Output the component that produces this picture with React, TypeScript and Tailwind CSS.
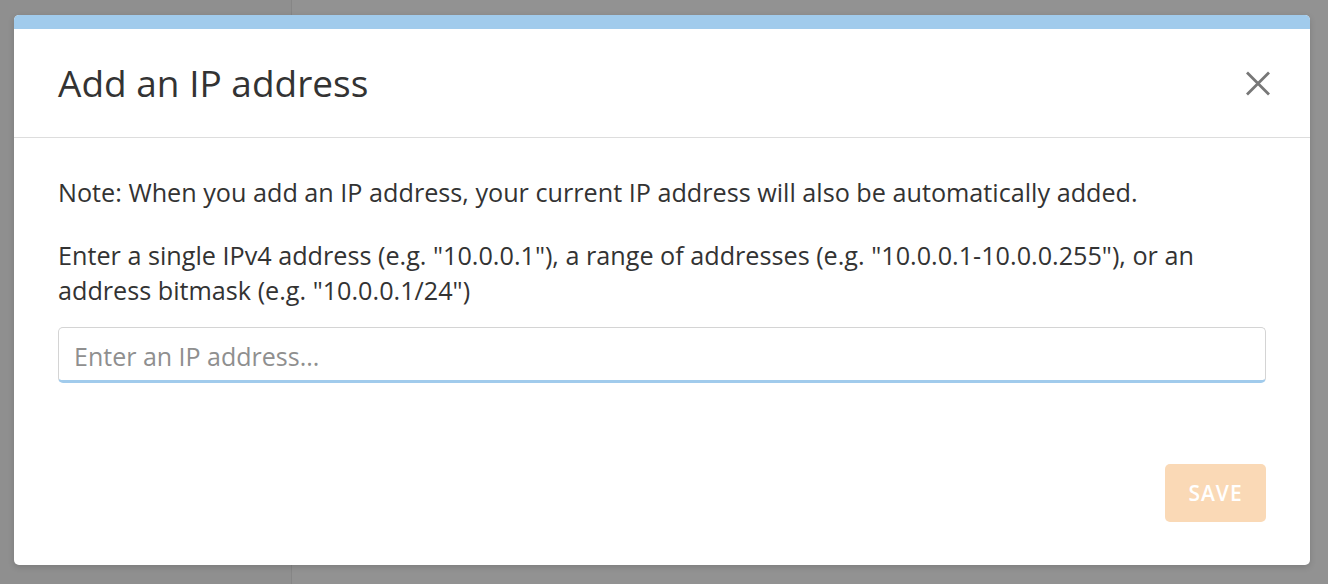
import React from "react";

export default function App() {
  return (
    <div
      className="relative flex h-[584px] w-full overflow-hidden bg-[#929292]"
      style={{ fontFamily: '"Open Sans", "Noto Sans", sans-serif' }}
    >
      <div className="h-full w-[292px] border-r border-[#868686] bg-[#8f8f8f]" />
      <div className="h-full flex-1 bg-[#929292]" />

      <div className="absolute left-[14px] top-[15px] flex h-[550px] w-[1296px] flex-col overflow-hidden rounded-[5px] bg-white shadow-[0_2px_6px_rgba(0,0,0,0.15)]">
        <div className="h-[14px] shrink-0 bg-[#a1cbec]" />
        <div className="flex h-[109px] shrink-0 items-center justify-between border-b border-[#dddddd] pl-[44px] pr-[40px]">
          <h1 className="pb-[2px] text-[37px] font-medium leading-none text-[#333333]">Add an IP address</h1>
          <button className="flex h-[24px] w-[24px] items-center justify-center text-[#777777]">
            <svg width="25" height="25" viewBox="0 0 24 24" fill="none" stroke="currentColor" strokeWidth="2.8" strokeLinecap="butt">
              <path d="M1 1 L23 23 M23 1 L1 23" />
            </svg>
          </button>
        </div>
        <div className="flex flex-1 flex-col px-[44px] pt-[37px]">
          <p className="text-[25.2px] leading-[35px] text-[#333333]">
            Note: When you add an IP address, your current IP address will also be automatically added.
          </p>
          <p className="mt-[28px] text-[25.2px] leading-[35px] text-[#333333]">
            Enter a single IPv4 address (e.g. "10.0.0.1"), a range of addresses (e.g. "10.0.0.1-10.0.0.255"), or an address bitmask (e.g. "10.0.0.1/24")
          </p>
          <input
            type="text"
            placeholder="Enter an IP address..."
            className="mt-[19px] h-[56px] w-full rounded-[5px] border border-[#d4d4d4] border-b-[3px] border-b-[#a1cbec] px-[15px] pt-[4px] text-[25px] text-[#333333] outline-none placeholder:text-[#8f8f8f]"
          />
          <div className="mb-[43px] mt-auto flex justify-end">
            <button className="h-[58px] w-[101px] rounded-[5px] bg-[#fad9b6] pt-[2px] text-[21px] font-semibold tracking-[1px] text-white">
              SAVE
            </button>
          </div>
        </div>
      </div>
    </div>
  );
}
